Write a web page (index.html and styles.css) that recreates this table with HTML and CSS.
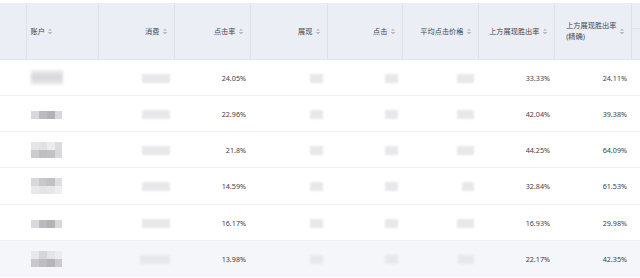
FILE: index.html
```html
<!DOCTYPE html>
<html lang="zh-CN">
<head>
<meta charset="utf-8">
<title>账户报表</title>
<link rel="stylesheet" href="styles.css">
</head>
<body>
<div class="wrap">
<table class="grid">
  <colgroup>
    <col class="c-sel"><col class="c-acc"><col class="c-n"><col class="c-n"><col class="c-show"><col class="c-click"><col class="c-n"><col class="c-n"><col class="c-show"><col class="c-tail">
  </colgroup>
  <thead>
    <tr>
      <th class="h-blank"></th>
      <th class="h-left"><span class="hc"><span class="ht">账户</span><span class="sort"></span></span></th>
      <th><span class="hc"><span class="ht">消费</span><span class="sort"></span></span></th>
      <th><span class="hc"><span class="ht">点击率</span><span class="sort"></span></span></th>
      <th><span class="hc"><span class="ht">展现</span><span class="sort"></span></span></th>
      <th><span class="hc"><span class="ht">点击</span><span class="sort"></span></span></th>
      <th><span class="hc"><span class="ht">平均点击价格</span><span class="sort"></span></span></th>
      <th><span class="hc"><span class="ht">上方展现胜出率</span><span class="sort"></span></span></th>
      <th><span class="hc"><span class="ht">上方展现胜出率<br>(精确)</span><span class="sort"></span></span></th>
      <th class="h-tail"><div class="group"></div></th>
    </tr>
  </thead>
  <tbody>
    <tr class="r36">
      <td></td>
      <td class="acc"><span class="blur-acc"></span></td>
      <td><span class="blob w28"></span></td>
      <td>24.05%</td>
      <td><span class="blob w13"></span></td>
      <td><span class="blob w13"></span></td>
      <td><span class="blob w17"></span></td>
      <td>33.33%</td>
      <td>24.11%</td>
      <td></td>
    </tr>
    <tr class="r36">
      <td></td>
      <td class="acc"><span class="mos one m2"></span></td>
      <td><span class="blob w28"></span></td>
      <td>22.96%</td>
      <td><span class="blob w13"></span></td>
      <td><span class="blob w13"></span></td>
      <td><span class="blob w17"></span></td>
      <td>42.04%</td>
      <td>39.38%</td>
      <td></td>
    </tr>
    <tr class="r36">
      <td></td>
      <td class="acc"><span class="mos two m3"></span></td>
      <td><span class="blob w28"></span></td>
      <td>21.8%</td>
      <td><span class="blob w13"></span></td>
      <td><span class="blob w13"></span></td>
      <td><span class="blob w17"></span></td>
      <td>44.25%</td>
      <td>64.09%</td>
      <td></td>
    </tr>
    <tr class="r37">
      <td></td>
      <td class="acc"><span class="mos two m4"></span></td>
      <td><span class="blob w28"></span></td>
      <td>14.59%</td>
      <td><span class="blob w13"></span></td>
      <td><span class="blob w13"></span></td>
      <td><span class="blob w12"></span></td>
      <td>32.84%</td>
      <td>61.53%</td>
      <td></td>
    </tr>
    <tr class="r36">
      <td></td>
      <td class="acc"><span class="mos one m5"></span></td>
      <td><span class="blob w28"></span></td>
      <td>16.17%</td>
      <td><span class="blob w13"></span></td>
      <td><span class="blob w13"></span></td>
      <td><span class="blob w17"></span></td>
      <td>16.93%</td>
      <td>29.98%</td>
      <td></td>
    </tr>
    <tr class="r37 hover">
      <td></td>
      <td class="acc"><span class="mos two m6"></span></td>
      <td><span class="blob w30"></span></td>
      <td>13.98%</td>
      <td><span class="blob w13"></span></td>
      <td><span class="blob w13"></span></td>
      <td><span class="blob w16"></span></td>
      <td>22.17%</td>
      <td>42.35%</td>
      <td></td>
    </tr>
  </tbody>
</table>
</div>
</body>
</html>
```
FILE: styles.css
```css
html, body {
  margin: 0;
  padding: 0;
  background: #ffffff;
}
body {
  font-family: "Noto Sans", "Noto Sans CJK SC", sans-serif;
  color: #3c3f46;
  overflow: hidden;
}
.wrap {
  padding-top: 3px;
  width: 640px;
}
.grid {
  width: 640px;
  table-layout: fixed;
  border-collapse: collapse;
  border-spacing: 0;
}
.c-sel { width: 26px; }
.c-acc { width: 72px; }
.c-n { width: 76px; }
.c-show { width: 77px; }
.c-click { width: 75px; }
.c-tail { width: 9px; }

thead th {
  height: 56px;
  padding: 0 7px 0 4px;
  background: #eceef5;
  border-left: 1px solid #dee1ea;
  border-bottom: 1px solid #e3e6ee;
  font-weight: normal;
  font-size: 7.2px;
  line-height: 11px;
  color: #43464e;
  text-align: right;
  vertical-align: middle;
}
thead th.h-blank { border-left: none; padding: 0; }
thead th.h-left { text-align: left; padding-left: 4px; }
thead th.h-tail { padding: 0; vertical-align: top; }
.group {
  height: 25px;
  border-bottom: 1px solid #dee1ea;
}
.hc {
  display: inline-flex;
  align-items: center;
  gap: 3px;
  text-align: left;
}
.ht { white-space: nowrap; }
.sort {
  display: inline-block;
  width: 4px;
  height: 6px;
  background:
    linear-gradient(to bottom right, transparent 50%, #b9bcc4 50%) 0 0 / 2px 2.5px no-repeat,
    linear-gradient(to bottom left, transparent 50%, #b9bcc4 50%) 2px 0 / 2px 2.5px no-repeat,
    linear-gradient(to top right, transparent 50%, #b9bcc4 50%) 0 3.5px / 2px 2.5px no-repeat,
    linear-gradient(to top left, transparent 50%, #b9bcc4 50%) 2px 3.5px / 2px 2.5px no-repeat;
}

tbody td {
  padding: 0 4px;
  border-bottom: 1px solid #eef0f5;
  font-size: 7.2px;
  color: #3c3f46;
  text-align: right;
  vertical-align: middle;
  white-space: nowrap;
}
tbody tr.r36 td { height: 35px; }
tbody tr.r37 td { height: 36px; }
tbody tr.hover td { background: #f5f6fa; border-bottom: none; }
tbody td.acc { text-align: left; padding-left: 5px; }

.blob {
  display: inline-block;
  height: 9px;
  vertical-align: middle;
  background: #e8e8eb;
  filter: blur(1.3px);
}
.w28 { width: 28px; }
.w30 { width: 30px; }
.w13 { width: 13px; }
.w12 { width: 12px; }
.w16 { width: 16px; }
.w17 { width: 17px; }

.blur-acc {
  display: inline-block;
  width: 32px;
  height: 15px;
  vertical-align: middle;
  background: linear-gradient(to bottom, #efeff1 0%, #d6d6d9 45%, #dfdfe2 70%, #f0f0f1 100%);
  filter: blur(1.5px);
}
.mos {
  display: inline-block;
  width: 31px;
  vertical-align: middle;
  filter: blur(0.3px);
}
.mos.one { height: 8px; }
.mos.two { height: 16px; }
.m2, .m5 {
  background: linear-gradient(to right, #d9d9dc 0 8px, #bbbbbf 8px 16px, #b3b3b7 16px 24px, #d9d9dc 24px);
}
.m3 {
  background:
    linear-gradient(to right, #e6e6e8 0 8px, #e2e2e4 8px 16px, #ececee 16px 24px, #dcdcde 24px) 0 0 / 100% 8px no-repeat,
    linear-gradient(to right, #cbcbce 0 8px, #bfbfc3 8px 16px, #c3c3c7 16px 24px, #d9d9dc 24px) 0 8px / 100% 8px no-repeat;
}
.m4 {
  background:
    linear-gradient(to right, #d8d8db 0 8px, #c8c8cc 8px 16px, #c1c1c5 16px 24px, #dedee0 24px) 0 0 / 100% 8px no-repeat,
    linear-gradient(to right, #e9e9eb 0 8px, #e4e4e6 8px 16px, #e7e7e9 16px 24px, #eeeef0 24px) 0 8px / 100% 8px no-repeat;
}
.m6 {
  background:
    linear-gradient(to right, #e8e8ea 0 8px, #d6d6d9 8px 16px, #e4e4e6 16px 24px, #ececee 24px) 0 0 / 100% 8px no-repeat,
    linear-gradient(to right, #c9c9cd 0 8px, #bebec2 8px 16px, #b6b6ba 16px 24px, #cbcbce 24px) 0 8px / 100% 8px no-repeat;
}
```
